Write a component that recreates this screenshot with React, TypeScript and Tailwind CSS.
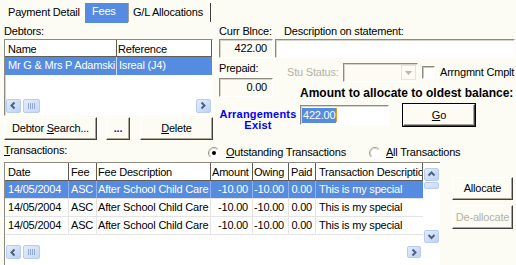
import React from "react";

type Dir = "left" | "right" | "up" | "down";

const raised =
  "border border-t-white border-l-white border-r-[#404040] border-b-[#404040] shadow-[inset_-1px_-1px_0_#aca899]";
const sunken =
  "border border-t-[#8d8b80] border-l-[#8d8b80] border-r-white border-b-white shadow-[inset_1px_1px_0_#d6d3c8]";

function Arrow({ dir }: { dir: Dir }) {
  const d = {
    left: "M5.5 1.5 L2.5 4.5 L5.5 7.5",
    right: "M2.5 1.5 L5.5 4.5 L2.5 7.5",
    up: "M1.5 5.5 L4.5 2.5 L7.5 5.5",
    down: "M1.5 3 L4.5 6 L7.5 3",
  }[dir];
  return (
    <svg width="9" height="9" viewBox="0 0 9 9">
      <path d={d} fill="none" stroke="#4d6185" strokeWidth="2" />
    </svg>
  );
}

function ScrollBtn({ dir, className }: { dir: Dir; className: string }) {
  return (
    <div
      className={`flex shrink-0 items-center justify-center rounded-[2px] border border-[#b7cbf3] bg-gradient-to-br from-[#e3ecfc] to-[#bdd1f6] ${className}`}
    >
      <Arrow dir={dir} />
    </div>
  );
}

function Grip({ vertical }: { vertical?: boolean }) {
  return (
    <div
      className={`flex shrink-0 items-center justify-center gap-[1px] rounded-[2px] border border-[#b7cbf3] bg-gradient-to-br from-[#e3ecfc] to-[#c6d7f7] ${
        vertical ? "h-[7px] w-[15px]" : "h-[14px] w-[17px]"
      }`}
    >
      {!vertical &&
        [0, 1, 2, 3].map((i) => <div key={i} className="h-[6px] w-[1px] bg-[#91a9df]" />)}
    </div>
  );
}

function Radio({ checked }: { checked?: boolean }) {
  return (
    <svg width="12" height="12" viewBox="0 0 12 12" className="shrink-0">
      <circle cx="6" cy="6" r="5.5" fill="white" />
      <path d="M2.11 9.89 A5.5 5.5 0 0 1 9.89 2.11" fill="none" stroke="#9a978b" strokeWidth="1" />
      <path d="M2.8 9.2 A4.5 4.5 0 0 1 9.2 2.8" fill="none" stroke="#d6d3c8" strokeWidth="1" />
      {checked && <circle cx="6" cy="6" r="2" fill="#000" />}
    </svg>
  );
}

const cols = [
  { name: "Date", w: "w-[64px]", hp: "pl-[3px]", bp: "pl-[3px]", right: false },
  { name: "Fee", w: "w-[28px]", hp: "pl-[2px]", bp: "pl-[2px]", right: false },
  { name: "Fee Description", w: "w-[114px]", hp: "pl-[1px]", bp: "pl-[1px]", right: false },
  { name: "Amount", w: "w-[42px]", hp: "pl-[1px]", bp: "pr-[4px]", right: true },
  { name: "Owing", w: "w-[36px]", hp: "pl-[1px]", bp: "pr-[4px]", right: true },
  { name: "Paid", w: "w-[27px]", hp: "pl-[2px]", bp: "pr-[3px]", right: true },
  { name: "Transaction Description", w: "w-[107px]", hp: "pl-[3px]", bp: "pl-[3px]", right: false },
];

const rows = [0, 1, 2].map(() => [
  "14/05/2004",
  "ASC",
  "After School Child Care",
  "-10.00",
  "-10.00",
  "0.00",
  "This is my special",
]);

export default function App() {
  return (
    <div className="flex h-[265px] w-[516px] flex-col overflow-hidden bg-[#fcfcf4] font-['Liberation_Sans',Arial,sans-serif] text-[11px] leading-[13px] tracking-[-0.2px] text-black">
      {/* tabs */}
      <div className="flex h-[23px] shrink-0 pl-[4px] pt-[3px]">
        <div className="w-[81px] pl-[4px] pt-[3px]">Payment Detail</div>
        <div className="w-[43px] bg-[#568be2] pl-[7px] pt-[2px] text-white">Fees</div>
        <div className="h-[19px] w-[83px] border-l border-r border-l-[#a5a297] border-r-[#404040] pl-[4px] pt-[3px]">
          G/L Allocations
        </div>
      </div>

      {/* top area */}
      <div className="flex h-[118px] shrink-0">
        {/* debtors */}
        <div className="ml-[4px] flex w-[209px] flex-col">
          <div className="h-[16px] pt-[2px]">Debtors:</div>
          <div className={`flex h-[77px] flex-col bg-white ${sunken}`}>
            <div className="flex h-[17px] shrink-0">
              <div className="w-[112px] border-b border-r border-[#5f5d55] bg-white pl-[3px] pt-[3px]">Name</div>
              <div className="flex-1 border-b border-r border-[#5f5d55] bg-white pl-[1px] pt-[3px]">Reference</div>
            </div>
            <div className="flex h-[18px] shrink-0 bg-[#568be2] text-white">
              <div className="w-[112px] whitespace-nowrap border-r border-white/70 pl-[3px] pt-[2px]">
                Mr G &amp; Mrs P Adamski
              </div>
              <div className="flex-1 pl-[2px] pt-[2px]">Isreal (J4)</div>
            </div>
            <div className="flex-1" />
            <div className="mb-[2px] flex h-[15px] shrink-0 items-center gap-[2px] pl-[1px] pr-[1px]">
              <ScrollBtn dir="left" className="h-[14px] w-[15px]" />
              <Grip />
              <div className="flex-1" />
              <ScrollBtn dir="right" className="h-[14px] w-[15px]" />
            </div>
          </div>
          <div className="mt-[1px] flex h-[23px]">
            <div className={`flex w-[93px] items-center justify-center ${raised}`}>
              <span>
                Debtor <span className="underline">S</span>earch...
              </span>
            </div>
            <div className={`ml-[9px] flex w-[24px] items-center justify-center font-bold text-[#1c1c6c] ${raised}`}>
              ...
            </div>
            <div className={`ml-[10px] flex w-[73px] items-center justify-center ${raised}`}>
              <span>
                <span className="underline">D</span>elete
              </span>
            </div>
          </div>
        </div>

        {/* balances */}
        <div className="ml-[6px] flex w-[54px] shrink-0 flex-col">
          <div className="h-[16px] whitespace-nowrap pt-[2px]">Curr Blnce:</div>
          <div className={`h-[19px] pr-[5px] text-right leading-[17px] ${sunken}`}>422.00</div>
          <div className="h-[20px] pt-[4px]">Prepaid:</div>
          <div className={`h-[19px] pr-[5px] text-right leading-[17px] ${sunken}`}>0.00</div>
          <div className="mt-[12px] w-[78px] shrink-0 text-center text-[11px] font-bold leading-[11px] tracking-[0.2px] text-[#0000ff]">
            Arrangements
            <br />
            Exist
          </div>
        </div>

        {/* description / allocate */}
        <div className="ml-[2px] flex w-[241px] flex-col">
          <div className="h-[16px] pl-[9px] pt-[2px]">Description on statement:</div>
          <div className={`h-[19px] w-[240px] bg-white ${sunken}`} />
          <div className="mt-[5px] flex h-[19px] items-center pl-[12px]">
            <div className="w-[56px] text-[#b5b2a6]">Stu Status:</div>
            <div className={`flex h-[19px] w-[75px] ${sunken}`}>
              <div className="flex-1" />
              <div className="mb-[1px] mr-[1px] mt-[1px] flex w-[15px] items-center justify-center border border-[#e6e4da]">
                <svg width="7" height="4" viewBox="0 0 7 4">
                  <path d="M0 0 H7 L3.5 4 Z" fill="#b9b6aa" />
                </svg>
              </div>
            </div>
            <div className="ml-[4px] h-[13px] w-[13px] border border-t-[#8d8b80] border-l-[#8d8b80] border-b-white border-r-white bg-white shadow-[inset_1px_1px_0_#c9c6ba]" />
            <div className="ml-[5px] whitespace-nowrap">Arrngmnt Cmplt</div>
          </div>
          <div className="mt-[4px] h-[14px] whitespace-nowrap pl-[25px] text-[12px] font-bold leading-[14px] tracking-[0px]">
            Amount to allocate to oldest balance:
          </div>
          <div className="mt-[3px] flex h-[24px] items-center pl-[25px]">
            <div className={`flex h-[20px] w-[89px] items-center bg-white pl-[1px] ${sunken}`}>
              <span className="bg-[#568be2] px-[1px] leading-[15px] text-white">422.00</span>
              <span className="h-[14px] w-[1px] bg-[#e89a2c]" />
            </div>
            <div className="ml-[13px] h-[24px] w-[74px] border border-black">
              <div className={`flex h-full w-full items-center justify-center ${raised}`}>
                <span>
                  <span className="underline">G</span>o
                </span>
              </div>
            </div>
          </div>
        </div>
      </div>

      {/* transactions header row */}
      <div className="flex h-[21px] shrink-0 items-start pl-[4px]">
        <div className="w-[204px] pt-[3px]">
          <span className="underline">T</span>ransactions:
        </div>
        <div className="mt-[6px]">
          <Radio checked />
        </div>
        <div className="ml-[6px] pt-[5px]">
          <span className="underline">O</span>utstanding Transactions
        </div>
        <div className="ml-[23px] mt-[6px]">
          <Radio />
        </div>
        <div className="ml-[5px] pt-[5px]">
          <span className="underline">A</span>ll Transactions
        </div>
      </div>

      {/* grid + buttons */}
      <div className="flex flex-1">
        <div className="ml-[4px] flex w-[436px] border-l border-t border-[#8d8b80] bg-white">
          <div className="flex w-[418px] flex-col">
            <div className="flex h-[18px] shrink-0">
              {cols.map((c) => (
                <div
                  key={c.name}
                  className={`${c.w} ${c.hp} shrink-0 overflow-hidden whitespace-nowrap border-b border-r border-[#5f5d55] pt-[3px]`}
                >
                  {c.name}
                </div>
              ))}
            </div>
            {rows.map((r, i) => (
              <div
                key={i}
                className={`flex h-[18px] shrink-0 border-b ${
                  i === 0 ? "border-[#e4e4e4] bg-[#568be2] text-white" : "border-[#e4e4e4]"
                }`}
              >
                {r.map((v, j) => (
                  <div
                    key={j}
                    className={`${cols[j].w} ${cols[j].bp} shrink-0 overflow-hidden whitespace-nowrap pt-[2px] ${
                      cols[j].right ? "text-right" : ""
                    } ${j < 6 ? (i === 0 ? "border-r border-[#8fb1ec]" : "border-r border-[#e4e4e4]") : ""}`}
                  >
                    {v}
                  </div>
                ))}
              </div>
            ))}
            <div className="h-[10px] shrink-0" />
            <div className="flex h-[14px] shrink-0 items-center gap-[2px] pl-[1px] pr-[2px]">
              <ScrollBtn dir="left" className="h-[14px] w-[15px]" />
              <Grip />
              <div className="flex-1" />
              <ScrollBtn dir="right" className="h-[12px] w-[14px]" />
            </div>
          </div>
          <div className="flex w-[17px] flex-col items-center">
            <ScrollBtn dir="up" className="mt-[5px] h-[13px] w-[15px]" />
            <div className="mt-[1px]">
              <Grip vertical />
            </div>
            <ScrollBtn dir="down" className="mt-[41px] h-[13px] w-[15px]" />
          </div>
        </div>

        <div className="ml-[12px] mt-[15px] flex flex-col gap-[5px]">
          <div className={`flex h-[23px] w-[61px] items-center justify-center ${raised}`}>Allocate</div>
          <div className={`flex h-[24px] w-[61px] items-center justify-center text-[#b5b2a6] ${raised}`}>
            De-allocate
          </div>
        </div>
      </div>
    </div>
  );
}
